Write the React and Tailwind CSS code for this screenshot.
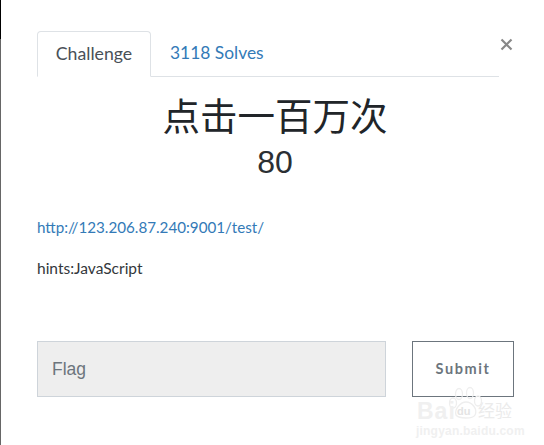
import React from "react";

const sans = "font-['Liberation_Sans',sans-serif]";
const lato = "font-['Lato',sans-serif]";

export default function App() {
  return (
    <div className={`relative w-[544px] h-[445px] overflow-hidden bg-white ${lato}`}>
      <div className="absolute left-0 top-0 w-px h-[445px] bg-[#666666]" />
      <div className="absolute left-0 top-0 w-px h-[39px] bg-black" />

      <div className="pl-[37px] pr-[31px] pt-[31px] flex flex-col">
        <div className="flex h-[46px] w-[462px] border-b border-[#dee2e6]">
          <div className="w-[114px] h-[46px] flex items-center justify-center bg-white border border-[#dee2e6] border-b-white rounded-t text-[17.7px] text-[#495057]">
            Challenge
          </div>
          <div className="pl-[19px] h-[45px] flex items-center text-[17.4px] text-[#337ab7]">
            3118 Solves
          </div>
        </div>

        <h1 className="mt-[13px] text-center text-[37.5px] leading-[48px] text-[#212529] font-['Noto_Sans_CJK_SC','Liberation_Sans',sans-serif]">
          点击一百万次
        </h1>
        <div className={`mt-[5px] text-center text-[32px] leading-[38px] text-[#2b2f33] ${sans}`}>80</div>

        <div className="mt-[35px] text-[15.2px] leading-[22px] text-[#337ab7]">http://123.206.87.240:9001/test/</div>
        <div className="mt-[19px] text-[15.5px] leading-[22px] text-[#33373b]">hints:JavaScript</div>

        <div className="mt-[62px] flex items-start gap-[26px] w-[477px]">
          <div className={`w-[349px] h-[56px] flex items-center pl-[14px] bg-[#eeeeee] border border-[#ced4da] text-[17.5px] text-[#6c757d] ${sans}`}>
            Flag
          </div>
          <div className={`w-[102px] h-[56px] flex items-center justify-center border border-[#6c757d] bg-white text-[14.5px] font-bold tracking-[1.6px] text-[#6c757d] ${lato}`}>
            Submit
          </div>
        </div>
      </div>

      <button className="absolute left-[499px] top-[33px] w-[15px] h-[22px] flex items-center justify-center text-[#888888]" aria-label="Close">
        <svg width="13" height="13" viewBox="0 0 13 13" fill="none" stroke="currentColor" strokeWidth="2.2">
          <path d="M1.5 1.5 L11.5 11.5 M11.5 1.5 L1.5 11.5" />
        </svg>
      </button>

      <div className="absolute left-[417px] top-[386px] w-[100px] h-[59px] pointer-events-none">
        <svg className="absolute left-[31px] top-0" width="36" height="34" viewBox="0 0 36 34" fill="none" stroke="#eeeeee" strokeWidth="1.3">
          <ellipse cx="11" cy="8" rx="3.5" ry="5.5" />
          <ellipse cx="22" cy="7" rx="3.5" ry="5.5" />
          <ellipse cx="5" cy="17" rx="3.5" ry="5" />
          <ellipse cx="30" cy="15" rx="3.5" ry="5" />
          <path d="M8 29 C6 23 13 16 18 16 C24 16 30 23 27 29 C25 33 11 33 8 29 Z" />
        </svg>
        <div className={`absolute left-0 top-[14px] text-[23px] leading-[22px] font-bold tracking-[1px] text-[#f0f0f0] ${sans}`}>Bai</div>
        <div className={`absolute left-[40px] top-[19px] text-[11px] leading-[13px] font-bold text-[#e4e4e4] ${sans}`}>du</div>
        <div className="absolute left-[61px] top-[14px] text-[17px] leading-[20px] text-[#ebebeb] font-['Noto_Sans_CJK_SC',sans-serif]">经验</div>
        <div className={`absolute left-[-1px] top-[38px] text-[12px] leading-[14px] font-bold tracking-[0.2px] text-[#f0f0f0] ${sans}`}>jingyan.baidu.com</div>
      </div>
    </div>
  );
}
